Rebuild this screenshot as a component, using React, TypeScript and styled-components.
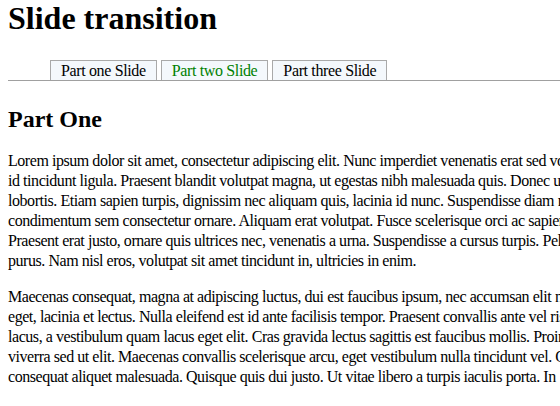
import React from "react";
import styled, { createGlobalStyle } from "styled-components";

const Global = createGlobalStyle`
  html, body { margin: 0; padding: 0; background: #fff; overflow: hidden; }
  body { font-family: "Liberation Serif", serif; color: #000; }
`;

const Page = styled.div`
  padding: 0 8px;
  width: 900px;
  font-family: "Liberation Serif", serif;
`;

const Title = styled.h1`
  margin: 0;
  font-family: "Liberation Serif", serif;
  font-size: 32px;
  font-weight: bold;
`;

const TabBar = styled.ul`
  list-style: none;
  margin: 23px 0 0 0;
  padding: 0 0 0 42px;
  display: flex;
  gap: 4px;
  border-bottom: 1px solid #a0a0a0;
`;

const Tab = styled.li<{ $active?: boolean }>`
  border: 1px solid #a9a9a9;
  border-bottom: none;
  background: #f4f8fc;
  padding: 0 10px 0 10px;
  font-family: "Liberation Serif", serif;
  font-size: 16px;
  line-height: 19px;
  letter-spacing: -0.36px;
  color: ${(p) => (p.$active ? "#008000" : "#000")};
`;

const Heading = styled.h2`
  margin: 25px 0 18px 0;
  font-family: "Liberation Serif", serif;
  font-size: 24px;
  font-weight: bold;
`;

const Para = styled.p`
  margin: 0 0 16px 0;
  font-family: "Liberation Serif", serif;
  font-size: 16px;
  line-height: 20px;
  letter-spacing: -0.45px;
  white-space: nowrap;
`;

const p1 = [
  "Lorem ipsum dolor sit amet, consectetur adipiscing elit. Nunc imperdiet venenatis erat sed volutpat. Morbi",
  "id tincidunt ligula. Praesent blandit volutpat magna, ut egestas nibh malesuada quis. Donec ultrices",
  "lobortis. Etiam sapien turpis, dignissim nec aliquam quis, lacinia id nunc. Suspendisse diam mi,",
  "condimentum sem consectetur ornare. Aliquam erat volutpat. Fusce scelerisque orci ac sapien",
  "Praesent erat justo, ornare quis ultrices nec, venenatis a urna. Suspendisse a cursus turpis. Pellentesque",
  "purus. Nam nisl eros, volutpat sit amet tincidunt in, ultricies in enim.",
];

const p2 = [
  "Maecenas consequat, magna at adipiscing luctus, dui est faucibus ipsum, nec accumsan elit nisl",
  "eget, lacinia et lectus. Nulla eleifend est id ante facilisis tempor. Praesent convallis ante vel risus",
  "lacus, a vestibulum quam lacus eget elit. Cras gravida lectus sagittis est faucibus mollis. Proin",
  "viverra sed ut elit. Maecenas convallis scelerisque arcu, eget vestibulum nulla tincidunt vel. Quisque",
  "consequat aliquet malesuada. Quisque quis dui justo. Ut vitae libero a turpis iaculis porta. In",
];

const Lines = ({ lines }: { lines: string[] }) => (
  <>
    {lines.map((l, i) => (
      <React.Fragment key={i}>
        {l}
        {i < lines.length - 1 && <br />}
      </React.Fragment>
    ))}
  </>
);

export default function App() {
  return (
    <Page>
      <Global />
      <Title>Slide transition</Title>
      <TabBar>
        <Tab>Part one Slide</Tab>
        <Tab $active>Part two Slide</Tab>
        <Tab>Part three Slide</Tab>
      </TabBar>
      <Heading>Part One</Heading>
      <Para>
        <Lines lines={p1} />
      </Para>
      <Para>
        <Lines lines={p2} />
      </Para>
    </Page>
  );
}
